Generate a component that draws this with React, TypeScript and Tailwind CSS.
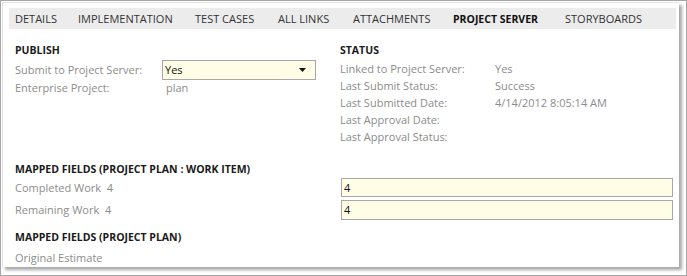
import React from "react";

const tabs: [string, string][] = [
  ["DETAILS", "w-[63px]"],
  ["IMPLEMENTATION", "w-[117px]"],
  ["TEST CASES", "w-[83px]"],
  ["ALL LINKS", "w-[75px]"],
  ["ATTACHMENTS", "w-[100px]"],
  ["PROJECT SERVER", "w-[112px]"],
  ["STORYBOARDS", "w-[90px]"],
];

const font = { fontFamily: '"Segoe UI", "Open Sans", "Noto Sans", sans-serif' };

function Row({ label, value }: { label: string; value?: string }) {
  return (
    <div className="flex h-[17px] items-center text-[#8c8c8c] whitespace-nowrap">
      <div className="w-[155px]">{label}</div>
      <div>{value}</div>
    </div>
  );
}

const H = "font-bold text-[#1a1a1a] h-[16px] text-[10.5px] whitespace-nowrap flex items-center";

export default function App() {
  return (
    <div className="w-[687px] h-[276px] bg-white border border-[#a6a6a6] p-px text-[11px] leading-[16px]" style={font}>
      <div className="relative w-[677px] h-[265px] bg-white border-l border-t border-[#e2e2e2] shadow-[3px_3px_3px_rgba(0,0,0,0.35)] pl-[6px] pt-[5px] pr-[3px]">
        <div className="flex h-[21px] items-center bg-[#ececec] pl-[6px] text-[#333] whitespace-nowrap">
          {tabs.map(([t, w]) => (
            <div key={t} className={w + (t === "PROJECT SERVER" ? " font-bold text-[#111] text-[10.5px]" : "")}>{t}</div>
          ))}
        </div>
        <div className="pl-[6px]">
          <div className="grid grid-cols-[325px_1fr] mt-[13px]">
            <div>
              <div className={H + " mb-[2px]"}>PUBLISH</div>
              <div className="flex h-[20px] items-center text-[#8c8c8c] whitespace-nowrap">
                <div className="w-[147px]">Submit to Project Server:</div>
                <div className="w-[154px] h-[20px] border border-[#a8a8a8] bg-[#fffde6] flex items-center justify-between pl-[2px] pr-[9px] text-[#111]">
                  <span>Yes</span>
                  <svg width="7" height="4" viewBox="0 0 7 4"><path d="M0 0h7L3.5 4z" fill="#111" /></svg>
                </div>
              </div>
              <div className="flex h-[17px] items-center text-[#8c8c8c] -mt-[1px] whitespace-nowrap">
                <div className="w-[151px]">Enterprise Project:</div>
                <div>plan</div>
              </div>
            </div>
            <div>
              <div className={H + " mb-[2px]"}>STATUS</div>
              <Row label="Linked to Project Server:" value="Yes" />
              <Row label="Last Submit Status:" value="Success" />
              <Row label="Last Submitted Date:" value="4/14/2012 8:05:14 AM" />
              <Row label="Last Approval Date:" />
              <Row label="Last Approval Status:" />
            </div>
          </div>
          <div className={H + " mt-[16px]"}>MAPPED FIELDS (PROJECT PLAN : WORK ITEM)</div>
          <div className="flex flex-col gap-[3px] mt-[1px]">
            <div className="grid grid-cols-[326px_332px] items-center h-[19px]">
              <div className="text-[#8c8c8c]">Completed Work&nbsp; 4</div>
              <div className="h-[19px] border border-[#a8a8a8] bg-[#fffde6] pl-[2px] flex items-center text-[#111]">4</div>
            </div>
            <div className="grid grid-cols-[326px_332px] items-center h-[20px]">
              <div className="text-[#8c8c8c]">Remaining Work&nbsp; 4</div>
              <div className="h-[20px] border border-[#a8a8a8] bg-[#fffde6] pl-[2px] flex items-center text-[#111]">4</div>
            </div>
          </div>
          <div className={H + " mt-[9px]"}>MAPPED FIELDS (PROJECT PLAN)</div>
          <div className="text-[#8c8c8c] mt-[5px] h-[16px] flex items-center">Original Estimate</div>
        </div>
      </div>
    </div>
  );
}
